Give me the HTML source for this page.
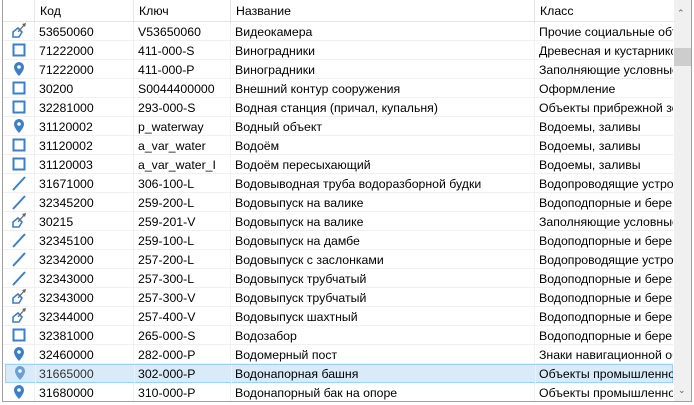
<!DOCTYPE html><html><head><style>
body{margin:0;width:694px;height:405px;background:#fff;font-family:"Liberation Sans",sans-serif;font-size:12.3px;color:#000;overflow:hidden;position:relative}
.fr{position:absolute;left:2px;top:0;width:688px;height:401px;border:1px solid #a0a0a0;border-top:none;overflow:hidden}
.h{position:absolute;top:0;left:0;width:672px;height:21px;border-bottom:1px solid #e5e5e5;background:#fff}
.c{position:absolute;white-space:nowrap;overflow:hidden;height:19px;line-height:20px}
.hd{position:absolute;top:0;height:21px;line-height:23px;border-left:1px solid #e5e5e5;padding-left:5px;box-sizing:border-box}
.r{position:absolute;left:0;width:670px;height:19px;border-bottom:1px solid #f0f0f0;box-sizing:border-box}
.v{position:absolute;top:0;height:19px;border-left:1px solid #f0f0f0}
.sel{background:#d9ebf9;border:1px solid #99d1ff;left:2px;width:668px}
.sb{position:absolute;left:671px;top:0;width:17px;height:401px;background:#f0f0f0}
</style></head><body><div class="fr">
<div class="h"><div class="hd" style="left:31px;width:99px">Код</div><div class="hd" style="left:130px;width:97px">Ключ</div><div class="hd" style="left:227px;width:304px">Название</div><div class="hd" style="left:531px;width:141px">Класс</div></div>
<div id="rows"></div>
<div class="sb"><div style="position:absolute;left:3px;top:8px;font-size:9px;color:#606060">&#8963;</div><div style="position:absolute;left:0;top:48px;width:17px;height:18px;background:#cdcdcd"></div><div style="position:absolute;left:4px;top:385px;font-size:9px;color:#606060">&#8964;</div></div>
</div>
<script>
var d=[["a","53650060","V53650060","Видеокамера","Прочие социальные объекты"],
["s","71222000","411-000-S","Виноградники","Древесная и кустарниковая"],
["p","71222000","411-000-P","Виноградники","Заполняющие условные"],
["s","30200","S0044400000","Внешний контур сооружения","Оформление"],
["s","32281000","293-000-S","Водная станция (причал, купальня)","Объекты прибрежной зоны"],
["p","31120002","p_waterway","Водный объект","Водоемы, заливы"],
["s","31120002","a_var_water","Водоём","Водоемы, заливы"],
["s","31120003","a_var_water_I","Водоём пересыхающий","Водоемы, заливы"],
["l","31671000","306-100-L","Водовыводная труба водоразборной будки","Водопроводящие устройства"],
["l","32345200","259-200-L","Водовыпуск на валике","Водоподпорные и береговые"],
["a","30215","259-201-V","Водовыпуск на валике","Заполняющие условные"],
["l","32345100","259-100-L","Водовыпуск на дамбе","Водоподпорные и береговые"],
["l","32342000","257-200-L","Водовыпуск с заслонками","Водопроводящие устройства"],
["l","32343000","257-300-L","Водовыпуск трубчатый","Водоподпорные и береговые"],
["a","32343000","257-300-V","Водовыпуск трубчатый","Водоподпорные и береговые"],
["a","32344000","257-400-V","Водовыпуск шахтный","Водоподпорные и береговые"],
["s","32381000","265-000-S","Водозабор","Водоподпорные и береговые"],
["p","32460000","282-000-P","Водомерный пост","Знаки навигационной обстановки"],
["p","31665000","302-000-P","Водонапорная башня","Объекты промышленности"],
["p","31680000","310-000-P","Водонапорный бак на опоре","Объекты промышленности"]];
var ic={s:'<rect x="3.5" y="3.5" width="11" height="11" fill="none" stroke="#3d7fc7" stroke-width="2"/>',
p:'<path d="M9 2a5 5 0 0 0-5 5c0 4 5 9 5 9s5-5 5-9a5 5 0 0 0-5-5z" fill="#3d7fc7"/><circle cx="9" cy="7" r="1.8" fill="#fff"/>',
l:'<path d="M3 16L15 3" stroke="#3d7fc7" stroke-width="2"/>',
a:'<path d="M3 10l5-4 4 4-3 5H3z" fill="none" stroke="#3d7fc7" stroke-width="1.6"/><path d="M8 10l7-8" stroke="#666" stroke-width="1.3"/><path d="M16 1l-4 1 3 3z" fill="#666"/>'};
var h='';d.forEach(function(r,i){var y=22+i*19,s=i==18,o=s?-1:0;
h+='<div class="r'+(s?' sel':'')+'" style="top:'+y+'px"><div class="v" style="left:'+(31+o*2)+'px"></div><div class="v" style="left:'+(130+o*2)+'px"></div><div class="v" style="left:'+(227+o*2)+'px"></div><div class="v" style="left:'+(531+o*2)+'px"></div>'+
'<svg style="position:absolute;left:'+(s?5:7)+'px;top:'+(s?-1:0)+'px;opacity:'+(s?0.7:1)+'" width="18" height="18">'+ic[r[0]]+'</svg>'+
'<div class="c" style="left:'+(36+o*3)+'px;top:'+o+'px;width:92px'+(s?';color:#333':'')+'">'+r[1]+'</div><div class="c" style="left:'+(135+o*3)+'px;top:'+o+'px;width:90px">'+r[2]+'</div><div class="c" style="left:'+(232+o*3)+'px;top:'+o+'px;width:296px">'+r[3]+'</div><div class="c" style="left:'+(536+o*3)+'px;top:'+o+'px;width:134px">'+r[4]+'</div></div>';});
document.getElementById('rows').innerHTML=h;
</script></body></html>
